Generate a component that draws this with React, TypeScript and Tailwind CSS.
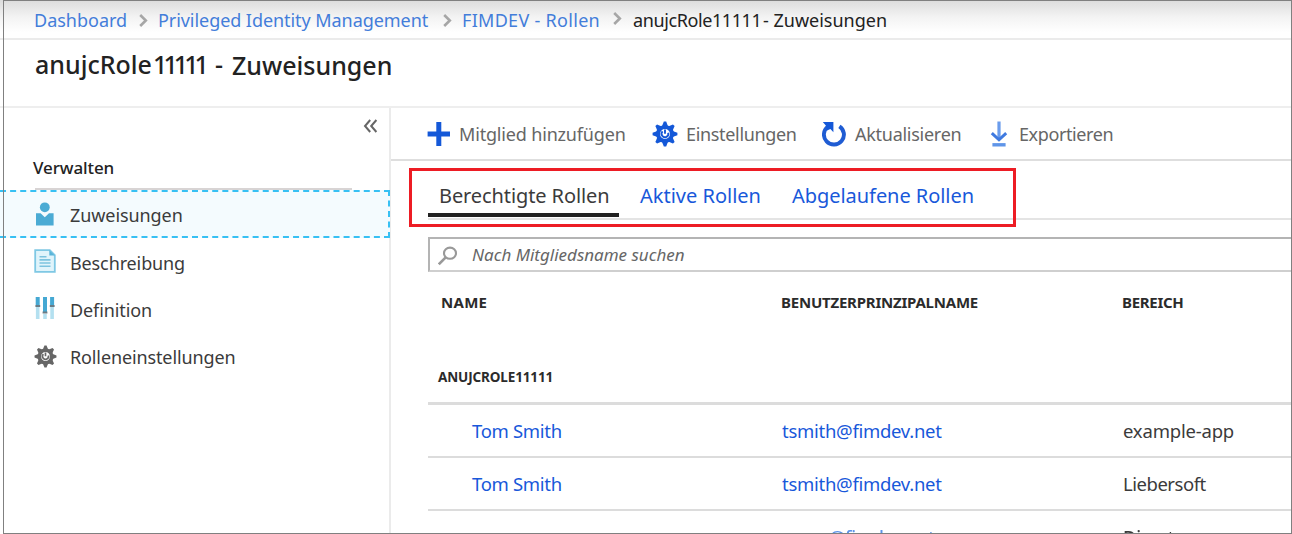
import type { ReactNode } from 'react';

const teeth = [0, 45, 90, 135, 180, 225, 270, 315];

function Gear({ size, color }: { size: number; color: string }) {
  return (
    <svg width={size} height={size} viewBox="0 0 26 26" className="block shrink-0">
      <g fill={color}>
        {teeth.map((a) => (
          <path key={a} d="M9.9 5.5 11.8.6h2.4l1.9 4.9z" transform={`rotate(${a} 13 13)`} />
        ))}
      </g>
      <circle cx="13" cy="13" r="7" fill="none" stroke={color} strokeWidth="4" />
      <path d="M13 8.5v4.2M16.2 11.8a3.4 3.4 0 1 1-5.6-1.4" fill="none" stroke={color} strokeWidth="1.9" />
    </svg>
  );
}

function PersonIcon() {
  return (
    <svg width="20" height="26" viewBox="0 0 20 26" className="mb-[2px] block shrink-0 fill-[#4babd4]">
      <circle cx="9.8" cy="6.3" r="4.9" />
      <path d="M1 12.2h4.6l4.2 4 4.2-4h4.6v12.3H1z" />
    </svg>
  );
}

function DocumentIcon() {
  return (
    <svg width="22" height="24" viewBox="0 0 22 24" className="mb-[3px] block shrink-0">
      <path d="M1.2 1.2h14.6l5 5v16.6H1.2z" fill="#e0f4fb" stroke="#7fc8e4" strokeWidth="1.8" />
      <path d="M15.3 1.2v5.3h5.5z" fill="#59b4d9" />
      <path d="M5.5 7.8h7M5.5 10.9h11M5.5 14h11M5.5 17.2h11" stroke="#7cc3df" strokeWidth="1.6" />
    </svg>
  );
}

function SlidersIcon() {
  return (
    <svg width="20" height="24" viewBox="0 0 20 24" className="mb-[3px] ml-[1px] block shrink-0">
      <path d="M2.7 1v8M10 1v15M17.1 1v8" stroke="#45a8d3" strokeWidth="4" />
      <path d="M2.7 11v12M10 18v5M17.1 11v12" stroke="#b4e0f0" strokeWidth="3.6" />
      <path d="M.4 10h4.8M14.8 10h4.8M7.6 16.6h4.8" stroke="#6b7c85" strokeWidth="2" />
    </svg>
  );
}

function PlusIcon() {
  return (
    <svg width="24" height="26" viewBox="0 0 24 26" className="block shrink-0">
      <path d="M11.8 1v24M.6 13H23" stroke="#1458d8" strokeWidth="5" />
    </svg>
  );
}

function RefreshIcon() {
  return (
    <svg width="24" height="26" viewBox="0 0 24 26" className="block shrink-0">
      <path d="M17.4 5.3A10 9.9 0 1 1 6 5.6" fill="none" stroke="#1f5cd3" strokeWidth="3.9" />
      <path d="M.8 1h10.6v10.2L8.4 8 5 9.6 3.8 4.6z" fill="#1458d8" />
    </svg>
  );
}

function DownloadIcon() {
  return (
    <svg width="18" height="26" viewBox="0 0 18 26" className="block shrink-0">
      <path d="M9 .5v18" stroke="#6a9cec" strokeWidth="3.2" />
      <path d="m1.8 12.2 7.2 6.6 7.2-6.6" fill="none" stroke="#3f7ae0" strokeWidth="3" />
      <path d="M2.4 23.8h13.2" stroke="#5f95e8" strokeWidth="3.4" />
    </svg>
  );
}

function SearchIcon() {
  return (
    <svg width="20" height="20" viewBox="0 0 20 20" className="mt-[3px] block shrink-0" fill="none" stroke="#999">
      <ellipse cx="12" cy="7.2" rx="6" ry="5.6" strokeWidth="2.1" />
      <path d="M7.7 11.4.8 18.4" strokeWidth="2.6" />
    </svg>
  );
}

function Chevron({ className }: { className: string }) {
  return (
    <svg width="9" height="13" viewBox="0 0 9 13" className={`block shrink-0 ${className}`}>
      <path d="m1.2 1 5.6 5.5L1.2 12" fill="none" stroke="#a6a6a6" strokeWidth="2.6" />
    </svg>
  );
}

function NavItem({ icon, label, tracking = '' }: { icon: ReactNode; label: string; tracking?: string }) {
  return (
    <div className="flex h-[47px] items-center">
      <span className="flex w-[35px] shrink-0 justify-start">{icon}</span>
      <span className={`text-[18px] text-[#3b3b3b] ${tracking}`}>{label}</span>
    </div>
  );
}

function Command({ icon, label, width, gap, tracking }: { icon: ReactNode; label: string; width: string; gap: string; tracking: string }) {
  return (
    <div className={`flex shrink-0 items-center ${width} ${gap}`}>
      {icon}
      <span className={`text-[18px] text-[#666] ${tracking}`}>{label}</span>
    </div>
  );
}

function Row({ upn, scope, scopeTracking }: { upn: string; scope: string; scopeTracking: string }) {
  return (
    <div className="grid h-[53px] grid-cols-[354px_341px_1fr] items-center border-b-2 border-[#dcdcdc] pt-[1px] text-[18.5px]">
      <span className="pl-[44px] tracking-[-0.32px] text-[#1858da]">Tom Smith</span>
      <span className="tracking-[-0.28px] text-[#1858da]">{upn}</span>
      <span className={`text-[#3b3b3b] ${scopeTracking}`}>{scope}</span>
    </div>
  );
}

export default function App() {
  return (
    <div className="relative flex h-[534px] w-[1292px] flex-col overflow-hidden whitespace-nowrap bg-white font-['Noto_Sans','Open_Sans',sans-serif] leading-[24px]">
      <header className="shrink-0">
        <div className="flex h-[40px] items-center border-b-2 border-[#ebebeb] bg-[linear-gradient(#dcdcdc,#f3f3f3_45%,#fff_85%)] pl-[34px] pt-[2px] text-[18px] text-[#437dda]">
          <span className="w-[105px]">Dashboard</span>
          <Chevron className="mr-[10px]" />
          <span className="w-[285px] tracking-[-0.06px]">Privileged Identity Management</span>
          <Chevron className="mr-[10px]" />
          <span className="w-[151px] tracking-[0.3px]">FIMDEV - Rollen</span>
          <Chevron className="mb-[4px] mr-[11px]" />
          <span className="mb-[1px] w-[131px] tracking-[-0.4px] text-[#222]">anujcRole11111</span>
          <span className="-ml-[1px] text-[#222]">- Zuweisungen</span>
        </div>
        <div className="flex h-[68px] items-center border-b-2 border-[#eee] pb-[18px] pl-[35px] text-[25px] font-medium leading-[34px] text-[#222]">
          <span className="w-[118px]">anujcRole</span>
          <span className="w-[62px] tracking-[-3.9px]">11111</span>
          <span className="w-[17px]">-</span>
          <span className="pt-[1px]">Zuweisungen</span>
        </div>
      </header>

      <div className="flex min-h-0 grow">
        <aside className="flex w-[391px] shrink-0 flex-col border-r-2 border-[#ebebeb]">
          <div className="flex h-[36px] items-center justify-end pr-[11px]">
            <svg width="15" height="14" viewBox="0 0 15 14" fill="none" stroke="#666" strokeWidth="2">
              <path d="M7.2 1 2 7l5.2 6M13.4 1 8.2 7l5.2 6" />
            </svg>
          </div>
          <div className="ml-[35px] mr-[37px] flex h-[46px] items-end border-b-2 border-[#d8d4d4] pb-[8px]">
            <span className="-ml-[2px] text-[17px] font-medium tracking-[-0.1px] text-[#222]">Verwalten</span>
          </div>
          <div className="-mr-[1px] h-[48px] border-2 border-l-0 border-dashed border-[#37c0f3] bg-[#f4fbfe] pl-[35px]">
            <div className="-mt-[1px]">
              <NavItem icon={<PersonIcon />} label="Zuweisungen" tracking="tracking-[-0.08px]" />
            </div>
          </div>
          <nav className="pl-[34px] pt-[1px] [&>div]:gap-[1px]">
            <NavItem icon={<DocumentIcon />} label="Beschreibung" tracking="tracking-[-0.12px]" />
            <NavItem icon={<SlidersIcon />} label="Definition" tracking="tracking-[-0.1px]" />
            <NavItem icon={<Gear size={23} color="#666" />} label="Rolleneinstellungen" tracking="tracking-[-0.12px]" />
          </nav>
        </aside>

        <main className="flex min-w-0 grow flex-col">
          <div className="flex h-[53px] shrink-0 items-center border-b-2 border-[#dedede] pl-[36px]">
            <Command icon={<PlusIcon />} label="Mitglied hinzufügen" width="w-[225px]" gap="gap-[8px]" tracking="tracking-[-0.17px]" />
            <Command icon={<Gear size={26} color="#1458d8" />} label="Einstellungen" width="w-[170px]" gap="gap-[8px]" tracking="tracking-[-0.33px]" />
            <Command icon={<RefreshIcon />} label="Aktualisieren" width="w-[168px]" gap="gap-[9px]" tracking="tracking-[-0.27px]" />
            <Command icon={<DownloadIcon />} label="Exportieren" width="w-[150px]" gap="gap-[11px]" tracking="tracking-[-0.4px]" />
          </div>

          <div className="ml-[37px] flex h-[59px] shrink-0 items-end border-b-2 border-[#e4e4e4] text-[20px]">
            <div className="mb-[1px] flex h-[47px] w-[191px] items-center border-b-4 border-[#222] pl-[11px] pt-[8px] tracking-[-0.1px] text-[#3b3b3b]">
              Berechtigte Rollen
            </div>
            <span className="flex h-[48px] w-[173px] items-center pl-[21px] pt-[3px] text-[#1858da]">Aktive Rollen</span>
            <span className="flex h-[48px] items-center pt-[3px] tracking-[-0.05px] text-[#1858da]">Abgelaufene Rollen</span>
          </div>

          <div className="ml-[37px] mt-[17px] flex h-[35px] shrink-0 items-center border-2 border-r-0 border-[#b4b4b4] border-b-[#cfcfcf] pl-[8px]">
            <SearchIcon />
            <span className="ml-[14px] text-[17px] italic text-[#666]">Nach Mitgliedsname suchen</span>
          </div>

          <section className="ml-[37px] flex shrink-0 flex-col font-normal">
            <div className="grid h-[60px] grid-cols-[354px_341px_1fr] items-center pb-[1px] text-[15px] font-bold text-[#2b2b2b]">
              <span className="pl-[13px] tracking-[0.3px]">NAME</span>
              <span className="-ml-[1px] tracking-[-0.22px]">BENUTZERPRINZIPALNAME</span>
              <span className="-ml-[1px] tracking-[-0.3px]">BEREICH</span>
            </div>
            <div className="flex h-[73px] items-end border-b-[3px] border-[#dcdcdc] pb-[13px] pl-[10px] text-[13.5px] font-bold tracking-[-0.13px] text-[#2b2b2b]">
              ANUJCROLE11111
            </div>
            <Row upn="tsmith@fimdev.net" scope="example-app" scopeTracking="tracking-[-0.2px]" />
            <Row upn="tsmith@fimdev.net" scope="Liebersoft" scopeTracking="tracking-[-0.47px]" />
            <div className="grid h-[53px] grid-cols-[401px_294px_1fr] pt-[14px] text-[18px] font-medium blur-[0.6px]">
              <span />
              <span className="tracking-[-0.2px] text-[#5c92e8]">@fimdev.net</span>
              <span className="text-[#3b3b3b]">Directory</span>
            </div>
          </section>
        </main>
      </div>

      <div className="pointer-events-none absolute inset-y-0 left-[3px] right-0 border border-[#808080]" />
      <div className="pointer-events-none absolute left-[409px] top-[168px] h-[59px] w-[607px] border-[3px] border-[#ed1c24]" />
    </div>
  );
}
